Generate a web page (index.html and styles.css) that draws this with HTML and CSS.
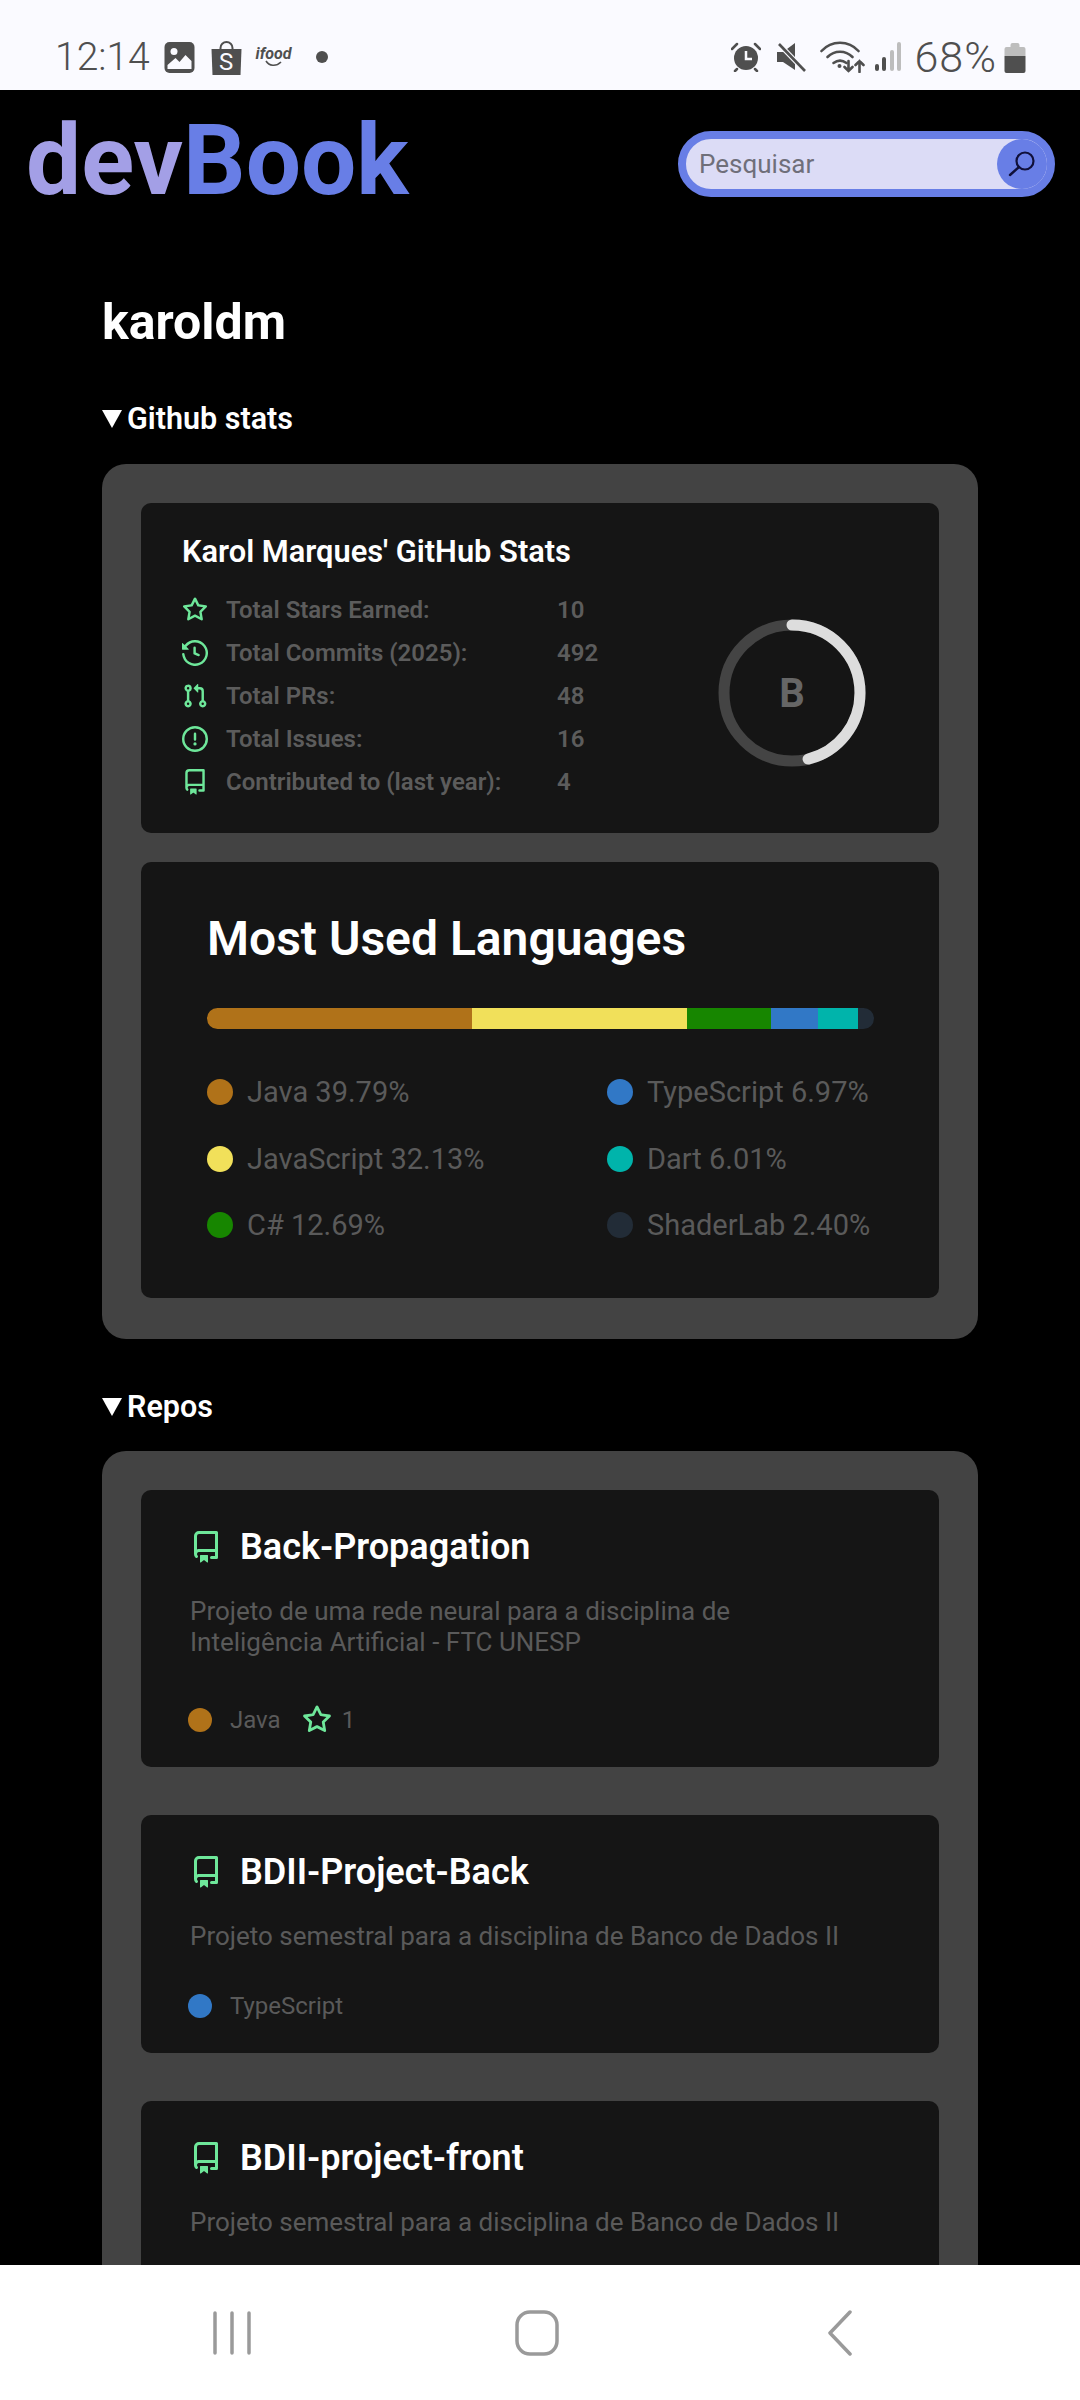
FILE: index.html
```html
<!DOCTYPE html>
<html lang="en">

<head>
    <meta charset="UTF-8">
    <meta name="viewport" content="width=device-width, initial-scale=1.0">
    <title>devBook</title>
    <link rel="stylesheet" href="styles.css">
</head>

<body>
    <svg class="sprites" width="0" height="0">
        <symbol id="i-star" viewBox="0 0 16 16"><path d="M8 .25a.75.75 0 01.673.418l1.882 3.815 4.21.612a.75.75 0 01.416 1.279l-3.046 2.97.719 4.192a.75.75 0 01-1.088.791L8 12.347l-3.766 1.98a.75.75 0 01-1.088-.79l.72-4.194L.818 6.374a.75.75 0 01.416-1.28l4.21-.611L7.327.668A.75.75 0 018 .25zm0 2.445L6.615 5.5a.75.75 0 01-.564.41l-3.097.45 2.24 2.184a.75.75 0 01.216.664l-.528 3.084 2.769-1.456a.75.75 0 01.698 0l2.77 1.456-.53-3.084a.75.75 0 01.216-.664l2.24-2.183-3.096-.45a.75.75 0 01-.564-.41L8 2.694v.001z"/></symbol>
        <symbol id="i-commits" viewBox="0 0 16 16"><path d="M1.643 3.143L.427 1.927A.25.25 0 000 2.104V5.75c0 .138.112.25.25.25h3.646a.25.25 0 00.177-.427L2.715 4.215a6.5 6.5 0 11-1.18 4.458.75.75 0 10-1.493.154 8.001 8.001 0 101.6-5.684zM7.75 4a.75.75 0 01.75.75v2.992l2.028.812a.75.75 0 01-.557 1.392l-2.5-1A.75.75 0 017 8.25v-3.5A.75.75 0 017.75 4z"/></symbol>
        <symbol id="i-pr" viewBox="0 0 16 16"><path d="M7.177 3.073L9.573.677A.25.25 0 0110 .854v4.792a.25.25 0 01-.427.177L7.177 3.427a.25.25 0 010-.354zM3.75 2.5a.75.75 0 100 1.5.75.75 0 000-1.5zm-2.25.75a2.25 2.25 0 113 2.122v5.256a2.251 2.251 0 11-1.5 0V5.372A2.25 2.25 0 011.5 3.25zM11 2.5h-1V4h1a1 1 0 011 1v5.628a2.251 2.251 0 101.5 0V5A2.5 2.5 0 0011 2.5zm1 10.25a.75.75 0 111.5 0 .75.75 0 01-1.5 0zM3.75 12a.75.75 0 100 1.5.75.75 0 000-1.5z"/></symbol>
        <symbol id="i-issue" viewBox="0 0 16 16"><path d="M8 1.5a6.5 6.5 0 100 13 6.5 6.5 0 000-13zM0 8a8 8 0 1116 0A8 8 0 010 8zm9 3a1 1 0 11-2 0 1 1 0 012 0zm-.25-6.25a.75.75 0 00-1.5 0v3.5a.75.75 0 001.5 0v-3.5z"/></symbol>
        <symbol id="i-repo" viewBox="0 0 16 16"><path fill-rule="evenodd" d="M2 2.5A2.5 2.5 0 014.5 0h8.75a.75.75 0 01.75.75v12.5a.75.75 0 01-.75.75h-2.5a.75.75 0 110-1.5h1.75v-2h-8a1 1 0 00-.714 1.7.75.75 0 01-1.072 1.05A2.495 2.495 0 012 11.5v-9zm10.5-1V9h-8c-.356 0-.694.074-1 .208V2.5a1 1 0 011-1h8zM5 12.25v3.25a.25.25 0 00.4.2l1.45-1.087a.25.25 0 01.3 0L8.6 15.7a.25.25 0 00.4-.2v-3.25a.25.25 0 00-.25-.25h-3.5a.25.25 0 00-.25.25z"/></symbol>
    </svg>

    <div class="phone">
        <div class="status-bar">
            <div class="status-left">
                <span class="time">12:14</span>
                <svg class="st-image" width="31" height="31" viewBox="0 0 30 31"><rect width="30" height="31" rx="5" fill="#4f4f4f"/><circle cx="9.5" cy="9.5" r="3.5" fill="#fafaff"/><path d="M3 27v-4l8-7 4 4 6-7 6 6v8z" fill="#fafaff"/></svg>
                <span class="st-bag"><svg width="31" height="35" viewBox="0 0 30 35"><path d="M9 11V8a6 6 0 0112 0v3" fill="none" stroke="#4f4f4f" stroke-width="2"/><path d="M0 9h30l-1 26H1z" fill="#4f4f4f"/></svg><span class="st-bag-s">S</span></span>
                <span class="st-ifood">ifood<svg width="18" height="7" viewBox="0 0 18 7"><path d="M1 1c3 5 10 6 15 1" fill="none" stroke="#4f4f4f" stroke-width="1.6"/></svg></span>
                <span class="st-dot"></span>
            </div>
            <div class="status-right">
                <svg class="st-alarm" width="30" height="30" viewBox="0 0 30 30"><path d="M1 7l5-5M29 7l-5-5M6 27l-2 2M24 27l2 2" stroke="#4f4f4f" stroke-width="2.5" stroke-linecap="round"/><circle cx="15" cy="16" r="12" fill="#4f4f4f"/><path d="M15 9v8h6" fill="none" stroke="#fafaff" stroke-width="2.5"/></svg>
                <svg class="st-mute" width="30" height="30" viewBox="0 0 30 30"><path d="M1 10h6l12-9v27L7 20H1z" fill="#4f4f4f"/><path d="M3 2l26 27" stroke="#fafaff" stroke-width="5"/><path d="M3 2l26 27" stroke="#4f4f4f" stroke-width="2.6"/></svg>
                <svg class="st-wifi" width="45" height="32" viewBox="0 0 44 32"><g fill="none" stroke="#4f4f4f" stroke-width="2.6" stroke-linecap="round"><path d="M1 10c10-11 27-11 37 0"/><path d="M7 16c7-7 18-7 25 0"/><path d="M13 22c4-3 9-3 13 0"/><path d="M28 20v10M24 26l4 4 4-4M39 31V20M35 24l4-4 4 4"/></g><circle cx="19" cy="25" r="2" fill="#4f4f4f"/></svg>
                <svg class="st-signal" width="26" height="30" viewBox="0 0 26 30"><rect x="0" y="22" width="4" height="7" rx="2" fill="#4f4f4f"/><rect x="7" y="15" width="4" height="14" rx="2" fill="#4f4f4f"/><rect x="15" y="8" width="4" height="21" rx="2" fill="#bdbdbd"/><rect x="22" y="0" width="4" height="29" rx="2" fill="#bdbdbd"/></svg>
                <span class="battery-text">68%</span>
                <svg class="st-battery" width="22" height="31" viewBox="0 0 21 31"><path d="M6 3a2 2 0 012-2h5a2 2 0 012 2v2h4a2 2 0 012 2v7H0V7a2 2 0 012-2h4z" fill="#bdbdbd"/><path d="M0 14h21v15a2 2 0 01-2 2H2a2 2 0 01-2-2z" fill="#4f4f4f"/></svg>
            </div>
        </div>

        <div class="screen">
            <header class="top">
                <div class="logo"><span class="logo-dev">dev</span><span class="logo-book">Book</span></div>
                <form class="search">
                    <input class="search-input" type="text" placeholder="Pesquisar">
                    <button class="search-btn" type="button">
                        <svg width="28" height="28" viewBox="0 0 28 28"><circle cx="17" cy="11" r="8.5" fill="none" stroke="#10103a" stroke-width="2.2"/><path d="M11 17L2 25" stroke="#10103a" stroke-width="2.4" stroke-linecap="round"/></svg>
                    </button>
                </form>
            </header>

            <main class="content">
                <h1 class="username">karoldm</h1>

                <div class="section-title">Github stats</div>
                <section class="panel stats-panel">
                    <div class="card stats-card">
                        <div class="stats-left">
                            <h2 class="stats-title">Karol Marques' GitHub Stats</h2>
                            <div class="stat-row"><svg class="icon"><use href="#i-star"/></svg><span class="stat-label">Total Stars Earned:</span><span>10</span></div>
                            <div class="stat-row"><svg class="icon"><use href="#i-commits"/></svg><span class="stat-label">Total Commits (2025):</span><span>492</span></div>
                            <div class="stat-row"><svg class="icon"><use href="#i-pr"/></svg><span class="stat-label">Total PRs:</span><span>48</span></div>
                            <div class="stat-row"><svg class="icon"><use href="#i-issue"/></svg><span class="stat-label">Total Issues:</span><span>16</span></div>
                            <div class="stat-row"><svg class="icon"><use href="#i-repo"/></svg><span class="stat-label">Contributed to (last year):</span><span>4</span></div>
                        </div>
                        <div class="rank">
                            <svg width="148" height="148" viewBox="0 0 148 148">
                                <circle cx="74" cy="74" r="68" fill="none" stroke="#444" stroke-width="11"/>
                                <circle cx="74" cy="74" r="68" fill="none" stroke="#ddd" stroke-width="11" stroke-linecap="round" stroke-dasharray="197 427" transform="rotate(-90 74 74)"/>
                            </svg>
                            <span class="rank-letter">B</span>
                        </div>
                    </div>

                    <div class="card langs-card">
                        <h2 class="langs-title">Most Used Languages</h2>
                        <div class="lang-bar">
                            <span class="seg" style="width: 39.79%; background: #b07219"></span>
                            <span class="seg" style="width: 32.13%; background: #f1e05a"></span>
                            <span class="seg" style="width: 12.69%; background: #178600"></span>
                            <span class="seg" style="width: 6.97%; background: #3178c6"></span>
                            <span class="seg" style="width: 6.01%; background: #00b4ab"></span>
                            <span class="seg" style="width: 2.41%; background: #222c37"></span>
                        </div>
                        <div class="lang-grid">
                            <div class="lang"><span class="dot" style="background: #b07219"></span>Java 39.79%</div>
                            <div class="lang"><span class="dot" style="background: #3178c6"></span>TypeScript 6.97%</div>
                            <div class="lang"><span class="dot" style="background: #f1e05a"></span>JavaScript 32.13%</div>
                            <div class="lang"><span class="dot" style="background: #00b4ab"></span>Dart 6.01%</div>
                            <div class="lang"><span class="dot" style="background: #178600"></span>C# 12.69%</div>
                            <div class="lang"><span class="dot" style="background: #222c37"></span>ShaderLab 2.40%</div>
                        </div>
                    </div>
                </section>

                <div class="section-title repos-title">Repos</div>
                <section class="panel repos-panel">
                    <div class="card repo-card">
                        <div class="repo-name"><svg class="icon icon-big"><use href="#i-repo"/></svg>Back-Propagation</div>
                        <p class="repo-desc">Projeto de uma rede neural para a disciplina de Inteligência Artificial - FTC UNESP</p>
                        <div class="repo-meta">
                            <span class="repo-dot" style="background: #b07219"></span><span>Java</span>
                            <svg class="icon icon-meta"><use href="#i-star"/></svg><span>1</span>
                        </div>
                    </div>
                    <div class="card repo-card">
                        <div class="repo-name"><svg class="icon icon-big"><use href="#i-repo"/></svg>BDII-Project-Back</div>
                        <p class="repo-desc">Projeto semestral para a disciplina de Banco de Dados II</p>
                        <div class="repo-meta">
                            <span class="repo-dot" style="background: #3178c6"></span><span>TypeScript</span>
                        </div>
                    </div>
                    <div class="card repo-card">
                        <div class="repo-name"><svg class="icon icon-big"><use href="#i-repo"/></svg>BDII-project-front</div>
                        <p class="repo-desc">Projeto semestral para a disciplina de Banco de Dados II</p>
                    </div>
                </section>
            </main>
        </div>

        <nav class="nav-bar">
            <svg width="40" height="44" viewBox="0 0 40 44"><path d="M3 2v40M20 2v40M37 2v40" stroke="#9a9a9a" stroke-width="3.5" stroke-linecap="round"/></svg>
            <svg class="nav-home" width="44" height="46" viewBox="0 0 44 46"><rect x="2" y="2" width="40" height="42" rx="13" fill="none" stroke="#9a9a9a" stroke-width="3.5"/></svg>
            <svg width="26" height="46" viewBox="0 0 26 46"><path d="M23 2L3 23l20 21" fill="none" stroke="#9a9a9a" stroke-width="3.5" stroke-linecap="round" stroke-linejoin="round"/></svg>
        </nav>
    </div>
</body>

</html>
```

FILE: styles.css
```css
body {
    margin: 0;
    padding: 0;
    font-family: Roboto, "Liberation Sans", sans-serif;
    background-color: #000;
}

.sprites {
    position: absolute;
}

.phone {
    width: 1080px;
    height: 2400px;
    display: flex;
    flex-direction: column;
    overflow: hidden;
}

/* status bar */

.status-bar {
    height: 90px;
    flex: none;
    box-sizing: border-box;
    padding: 24px 54px 0 55px;
    display: flex;
    align-items: center;
    justify-content: space-between;
    background-color: #fafaff;
    color: #4f4f4f;
}

.status-left,
.status-right {
    display: flex;
    align-items: center;
}

.time {
    font-size: 39px;
    font-weight: 300;
    width: 109px;
}

.st-bag {
    position: relative;
    display: flex;
    margin-left: 16px;
}

.st-bag-s {
    position: absolute;
    left: 8px;
    top: 10px;
    font-size: 24px;
    line-height: 24px;
    color: #fafaff;
}

.st-ifood {
    display: flex;
    flex-direction: column;
    align-items: center;
    width: 35px;
    margin-left: 14px;
    font-size: 16px;
    line-height: 13px;
    font-weight: 700;
    font-style: italic;
}

.st-dot {
    width: 12px;
    height: 12px;
    margin-left: 25px;
    border-radius: 50%;
    background-color: #4f4f4f;
}

.st-mute {
    margin-left: 15px;
}

.st-wifi {
    margin-left: 14px;
}

.st-signal {
    margin-left: 10px;
}

.battery-text {
    margin-left: 14px;
    font-size: 43px;
    font-weight: 300;
    letter-spacing: 1px;
}

.st-battery {
    margin-left: 7px;
}

/* header */

.screen {
    flex: 1;
    min-height: 0;
    overflow: hidden;
    background-color: #000;
    color: #fff;
}

.top {
    display: flex;
    align-items: center;
    justify-content: space-between;
    padding: 18px 25px 0 26px;
    height: 104px;
}

.logo {
    margin-top: 2px;
    font-size: 98px;
    font-weight: 700;
    line-height: 104px;
}

.logo-dev {
    color: #a39fe6;
}

.logo-book {
    color: #687ee6;
}

.search {
    width: 377px;
    height: 66px;
    box-sizing: border-box;
    margin-top: 7px;
    display: flex;
    border: 8px solid #687ee6;
    border-radius: 33px;
    background-color: #dcdcf6;
}

.search-input {
    flex: 1;
    min-width: 0;
    padding: 0 0 0 13px;
    border: none;
    outline: none;
    background: none;
    font-family: inherit;
    font-size: 26px;
}

.search-input::placeholder {
    color: #6f6f7a;
    opacity: 1;
}

.search-btn {
    width: 50px;
    height: 50px;
    padding: 0;
    border: none;
    border-radius: 50%;
    display: flex;
    align-items: center;
    justify-content: center;
    background-color: #687ee6;
}

/* content */

.content {
    padding: 0 102px;
}

.username {
    margin: 80px 0 0;
    font-size: 50px;
    line-height: 60px;
    font-weight: 700;
}

.section-title {
    display: flex;
    align-items: center;
    gap: 5px;
    margin-top: 49px;
    font-size: 30.5px;
    line-height: 36px;
    font-weight: 600;
}

.section-title::before {
    content: "";
    border-left: 10px solid transparent;
    border-right: 10px solid transparent;
    border-top: 18px solid #fff;
}

.repos-title {
    margin-top: 50px;
}

.panel {
    margin-top: 27px;
    padding: 40px 39px;
    display: flex;
    flex-direction: column;
    gap: 29px;
    border-radius: 24px;
    background-color: #434343;
}

.stats-panel {
    padding-top: 39px;
    padding-bottom: 41px;
}

.repos-panel {
    gap: 48px;
    margin-top: 26px;
    padding-top: 39px;
}

.card {
    border-radius: 10px;
    background-color: #151515;
}

.icon {
    width: 26px;
    height: 26px;
    flex: none;
    fill: #6ee79a;
}

/* stats card */

.stats-card {
    height: 330px;
    box-sizing: border-box;
    padding: 31px 73px 0 41px;
    display: flex;
    justify-content: space-between;
    align-items: flex-start;
}

.stats-title {
    margin: 0 0 19px;
    font-size: 30.8px;
    line-height: 36px;
    font-weight: 600;
}

.stat-row {
    display: flex;
    align-items: center;
    gap: 18px;
    height: 42.8px;
    font-size: 24px;
    font-weight: 600;
    color: #5c5c5c;
}

.stat-label {
    width: 313px;
}

.rank {
    position: relative;
    width: 148px;
    height: 148px;
    margin-top: 85px;
}

.rank-letter {
    position: absolute;
    inset: 0;
    display: flex;
    align-items: center;
    justify-content: center;
    font-size: 40px;
    font-weight: 700;
    color: #666;
}

/* languages card */

.langs-card {
    height: 436px;
    box-sizing: border-box;
    padding: 49px 65px 0 66px;
}

.langs-title {
    margin: 0;
    font-size: 48px;
    line-height: 56px;
    font-weight: 600;
}

.lang-bar {
    display: flex;
    height: 21px;
    margin-top: 41px;
    border-radius: 11px;
    overflow: hidden;
}

.seg {
    display: block;
}

.lang-grid {
    display: grid;
    grid-template-columns: 400px 1fr;
    grid-auto-rows: 66.5px;
    margin-top: 30px;
}

.lang {
    display: flex;
    align-items: center;
    gap: 14px;
    font-size: 29px;
    white-space: nowrap;
    color: #5a5a5a;
}

.dot {
    width: 26px;
    height: 26px;
    flex: none;
    border-radius: 50%;
}

/* repos */

.repo-card {
    box-sizing: border-box;
    padding: 39px 80px 0 49px;
    min-height: 238px;
}

.repo-card:first-child {
    height: 277px;
}

.repo-name {
    display: flex;
    align-items: center;
    gap: 18px;
    font-size: 36px;
    line-height: 36px;
    font-weight: 600;
    color: #fff;
}

.icon-big {
    width: 32px;
    height: 32px;
}

.repo-desc {
    margin: 31px 0 0;
    font-size: 26px;
    line-height: 31px;
    color: #5a5a5a;
}

.repo-meta {
    display: flex;
    align-items: center;
    margin-top: 40px;
    font-size: 24px;
    color: #5a5a5a;
}

.repo-card:first-child .repo-meta {
    margin-top: 47px;
}

.repo-dot {
    width: 24px;
    height: 24px;
    margin: 0 18px 0 -2px;
    border-radius: 50%;
}

.icon-meta {
    width: 30px;
    height: 30px;
    margin: 0 10px 0 21px;
}

/* bottom nav */

.nav-bar {
    height: 135px;
    flex: none;
    box-sizing: border-box;
    padding: 0 227px 0 212px;
    display: flex;
    align-items: center;
    justify-content: space-between;
    background-color: #fff;
}

.nav-home {
    margin-right: 6px;
}
```
